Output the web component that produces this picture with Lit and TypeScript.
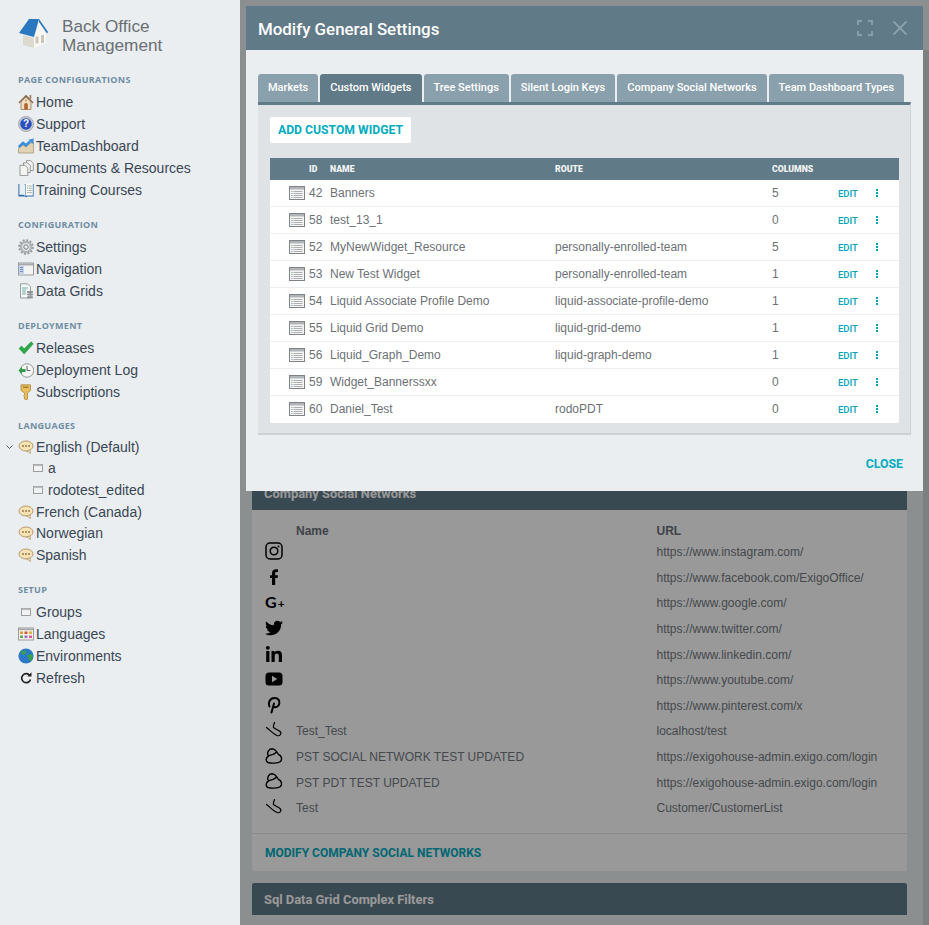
import { LitElement, html, css } from 'lit';
import { customElement } from 'lit/decorators.js';

// sidebar icons, all drawn on a 16x16 box
const ICONS: Record<string, unknown> = {
  home: html`<svg viewBox="0 0 16 16"><path d="M3 7.5V15.500h10V7.5L8 3z" fill="#f1dfc4" stroke="#8a6d50" stroke-width=".7"/><path d="M.4 8.400 8 .8l7.600 7.600-1 1L8 3 1.400 9.400z" fill="#8b6a4f"/><rect x="11.500" y="1" width="1.800" height="4" fill="#a58468"/><path d="M6.200 15.500v-4.800a1.800 1.800 0 0 1 3.600 0v4.800z" fill="#b4642a"/><rect x="7" y="5.500" width="2" height="2" fill="#c9a77e"/></svg>`,
  help: html`<svg viewBox="0 0 16 16"><circle cx="8" cy="8" r="7.500" fill="#c8ccd3" stroke="#7f8794" stroke-width=".6"/><circle cx="8" cy="8" r="5.800" fill="#2c4fc0"/><text x="8" y="11.400" text-anchor="middle" font-family="Liberation Sans" font-weight="700" font-size="10" fill="#fff">?</text></svg>`,
  chart: html`<svg viewBox="0 0 16 16"><path d="M.5 10 5 7l3 2 4-3.500 3.500-1.500V15H.5z" fill="#e2d3b4" stroke="#9c8c6c" stroke-width=".7"/><path d="M.8 9 5 5l3 2.200 4.200-3.800" fill="none" stroke="#3a8fdc" stroke-width="2.600"/><path d="M10.300 1.700 15.800.5l-.8 5.500z" fill="#3a8fdc"/></svg>`,
  docs: html`<svg viewBox="0 0 16 16"><g fill="#f4f5f3" stroke="#8a8f8c" stroke-width=".9"><path d="M8.500.6h4l2.800 2.800V10.500H8.500z"/><path d="M5.500 2.800h4l2.800 2.800v7H5.500z"/><path d="M2 5.300h5l2.800 2.800v7.500H2z"/></g></svg>`,
  book: html`<svg viewBox="0 0 16 16"><path d="M.4 2h6.600l1 1 1-1h6.600v12.500H9l-1 1-1-1H.4z" fill="#2f6ca8"/><path d="M1.400 1.200C4 1 6 1.500 7.500 3v11C6 12.800 4 12.500 1.400 13z" fill="#e9f0f4"/><rect x="8" y="1.500" width="6.800" height="12" fill="#fbfbf8"/><path d="M10.800 4h3M10.800 6.200h3M10.800 8.400h3M10.800 10.600h3" stroke="#8d979c" stroke-width=".8"/><path d="M9.200 4h1M9.200 6.200h1" stroke="#3f9d4b" stroke-width=".8"/><path d="M9.200 8.400h1M9.200 10.600h1" stroke="#c8553d" stroke-width=".8"/></svg>`,
  gear: html`<svg viewBox="0 0 16 16"><circle cx="8" cy="8" r="5" fill="none" stroke="#b3b6b8" stroke-width="2.600"/><circle cx="8" cy="8" r="6.800" fill="none" stroke="#9a9da0" stroke-width="2" stroke-dasharray="2 1.560"/><circle cx="8" cy="8" r="2.200" fill="none" stroke="#77797b" stroke-width="1"/></svg>`,
  nav: html`<svg viewBox="0 0 16 16"><rect x=".5" y="2" width="15" height="12" fill="#f4f4f4" stroke="#85888b" stroke-width=".8"/><rect x="1" y="2.500" width="14" height="2" fill="#a7abae"/><rect x="1" y="4.500" width="5" height="9" fill="#c6d3ea"/><path d="M2 6.500h3M2 8.500h3M2 10.500h3" stroke="#5a7fc0" stroke-width=".8"/></svg>`,
  grid: html`<svg viewBox="0 0 16 16"><path d="M2.500.8h7l3 3V15h-10z" fill="#f6f8f6" stroke="#7f8a86" stroke-width=".8"/><path d="M4 5h6M4 7h4M4 9h4M4 11h4" stroke="#4f9d9b" stroke-width=".8"/><g fill="#8d9196"><rect x="9" y="8" width="6" height="2" rx=".8"/><rect x="9" y="10.600" width="6" height="2" rx=".8"/><rect x="9" y="13.200" width="6" height="2" rx=".8"/></g></svg>`,
  check: html`<svg viewBox="0 0 16 16"><path d="M1 8.500 3.600 6l2.600 2.800L13 1.800l2.300 2L6.200 14z" fill="#2fa84a" stroke="#1f8a3a" stroke-width=".5"/></svg>`,
  clock: html`<svg viewBox="0 0 16 16"><circle cx="9" cy="8.500" r="6.700" fill="#f4f5f4" stroke="#8a8f8c" stroke-width=".9"/><path d="M9 4v4.500h3.500" fill="none" stroke="#555" stroke-width=".9"/><path d="M.5 8.500 4 4.700v2.300h3.500v3H4v2.300z" fill="#2ca04a"/></svg>`,
  key: html`<svg viewBox="0 0 16 16"><path d="M3 .8h9.500v5.700L9.500 9v6.200L8 16 6.500 15v-1.200L5.800 13l.7-.8-.7-.8.700-.8V9L3 6.500z" fill="#e8bd5e" stroke="#a57f2c" stroke-width=".7"/><rect x="5" y="2.500" width="5.500" height="1.500" fill="#a57f2c"/></svg>`,
  speech: html`<svg viewBox="0 0 16 16"><ellipse cx="8" cy="7" rx="7" ry="5" fill="#f7e3b3" stroke="#a8865a" stroke-width=".8"/><path d="M8.500 11.800 12.500 14.500l-.5-3.500z" fill="#f7e3b3" stroke="#a8865a" stroke-width=".6"/><g fill="#8c6d45"><circle cx="5" cy="7" r=".9"/><circle cx="8" cy="7" r=".9"/><circle cx="11" cy="7" r=".9"/></g></svg>`,
  folder: html`<svg viewBox="0 0 16 16"><rect x="3.500" y="4.500" width="9" height="7" fill="#f2f3f3" stroke="#85888b" stroke-width=".8"/><rect x="3.500" y="4.500" width="9" height="1.600" fill="#b9bcbe"/></svg>`,
  lang: html`<svg viewBox="0 0 16 16"><rect x=".5" y="2" width="15" height="12" fill="#f5f1e6" stroke="#85888b" stroke-width=".8"/><rect x="1" y="2.500" width="14" height="1.700" fill="#a7abae"/><rect x="2" y="5.500" width="3" height="2.500" fill="#d89b3f"/><rect x="6.500" y="5.500" width="3" height="2.500" fill="#c75a3a"/><rect x="11" y="5.500" width="3" height="2.500" fill="#d8b53f"/><rect x="2" y="9.500" width="3" height="2.500" fill="#5aa95f"/><rect x="6.500" y="9.500" width="3" height="2.500" fill="#a46ac0"/><rect x="11" y="9.500" width="3" height="2.500" fill="#d85a9b"/></svg>`,
  globe: html`<svg viewBox="0 0 16 16"><circle cx="8" cy="8" r="7.600" fill="#2a78c8"/><path d="M3 3.500 7 2l1.500 2-2 2.500-2 .5zM9 7l4.500-1 1.500 3-2.500 4.500L10.500 11z" fill="#3aa04f"/></svg>`,
  refresh: html`<svg viewBox="0 0 16 16"><path d="M11.800 5.500A4.500 4.500 0 1 0 12.500 9.500" fill="none" stroke="#222" stroke-width="1.700"/><path d="M9.300 6.500h4.200V2.300z" fill="#222"/></svg>`,
};

const SOCIALS: Record<string, unknown> = {
  instagram: html`<svg viewBox="0 0 18 18"><rect x="1" y="1" width="16" height="16" rx="4" fill="none" stroke="#000" stroke-width="1.500"/><circle cx="9" cy="9" r="3.800" fill="none" stroke="#000" stroke-width="1.500"/><circle cx="13.500" cy="4.500" r="1"/></svg>`,
  facebook: html`<svg viewBox="0 0 18 18"><path d="M7 17V10H5V7.200h2V5.300C7 2.700 8.500 1.200 11 1.200h2v2.900h-1.400c-1 0-1.400.5-1.400 1.300v1.800H13l-.4 2.800h-2.400v7z"/></svg>`,
  twitter: html`<svg viewBox="1.500 3 21 19"><path d="M22.460 6c-.77.35-1.600.58-2.460.69.880-.53 1.560-1.370 1.880-2.380-.83.5-1.750.85-2.720 1.050C18.370 4.500 17.260 4 16 4c-2.350 0-4.270 1.920-4.270 4.290 0 .34.04.67.11.98-3.560-.18-6.730-1.890-8.840-4.480-.37.63-.58 1.370-.58 2.150 0 1.490.75 2.810 1.910 3.560-.71 0-1.370-.2-1.950-.5v.03c0 2.080 1.480 3.820 3.440 4.210-.36.1-.74.15-1.130.15-.27 0-.54-.03-.8-.08.54 1.690 2.110 2.950 4 2.980-1.460 1.160-3.310 1.840-5.330 1.840-.34 0-.68-.02-1.020-.06C3.440 20.290 5.700 21 8.120 21 16 21 20.330 14.460 20.330 8.790c0-.19 0-.37-.01-.56.84-.6 1.560-1.360 2.140-2.230z"/></svg>`,
  linkedin: html`<svg viewBox="0 0 18 18"><circle cx="2.800" cy="2.800" r="1.900"/><rect x="1.200" y="6" width="3.200" height="11"/><path d="M6.500 6h3v1.500C10.200 6.400 11.400 5.700 13 5.700c3 0 4 1.900 4 4.800V17h-3.200v-5.800c0-1.600-.5-2.600-1.900-2.600-1.500 0-2.200 1.100-2.200 2.600V17H6.500z"/></svg>`,
  youtube: html`<svg viewBox="0 0 18 18"><path fill-rule="evenodd" d="M4 2.500h10a3.500 3.500 0 0 1 3.500 3.500v6a3.500 3.500 0 0 1-3.500 3.500H4A3.500 3.500 0 0 1 .5 12V6A3.500 3.500 0 0 1 4 2.500zM7 5.800v6.400L12.200 9z"/></svg>`,
  pinterest: html`<svg viewBox="0 0 18 18"><path d="M6.500 16.500 9 7.500M4.500 10.500C3 8 4 2 9.500 2c4 0 5.500 3 4.800 5.800-.7 3-3.800 4.300-5.800 2.700" fill="none" stroke="#000" stroke-width="2" stroke-linecap="round"/></svg>`,
  scribble: html`<svg class="hand" viewBox="0 0 18 18"><path d="M1.500 5.500C5 8 8 12 12 13.500c3 1 5-2 3-4-2-2-5-2.500-6.500-4-.5-1.500.5-3.500 1-5" fill="none" stroke="#000" stroke-width="1.200" stroke-linecap="round"/></svg>`,
  cloud: html`<svg class="hand" viewBox="0 0 18 18"><path d="M3.500 8C1.500 5 3.500 1 7 .8c3 0 5 3.200 6.500 5.700 3 1 4 4.500 2 7-2.500 2-9.500 2-12.500 1-2.500-1-2.500-5 .5-6.500 2.500-1.500 5.500-1 7.500-3.500" fill="none" stroke="#000" stroke-width="1.400" stroke-linecap="round"/></svg>`,
};

const NAV = [
  {
    title: 'PAGE CONFIGURATIONS',
    items: [
      ['home', 'Home'],
      ['help', 'Support'],
      ['chart', 'TeamDashboard'],
      ['docs', 'Documents & Resources'],
      ['book', 'Training Courses'],
    ],
  },
  {
    title: 'CONFIGURATION',
    items: [
      ['gear', 'Settings'],
      ['nav', 'Navigation'],
      ['grid', 'Data Grids'],
    ],
  },
  {
    title: 'DEPLOYMENT',
    items: [
      ['check', 'Releases'],
      ['clock', 'Deployment Log'],
      ['key', 'Subscriptions'],
    ],
  },
];

const LANGUAGES = [
  ['speech', 'English (Default)', 'open'],
  ['folder', 'a', 'sub'],
  ['folder', 'rodotest_edited', 'sub'],
  ['speech', 'French (Canada)', ''],
  ['speech', 'Norwegian', ''],
  ['speech', 'Spanish', ''],
];

const SETUP = [
  ['folder', 'Groups'],
  ['lang', 'Languages'],
  ['globe', 'Environments'],
  ['refresh', 'Refresh'],
];

const TABS = ['Markets', 'Custom Widgets', 'Tree Settings', 'Silent Login Keys', 'Company Social Networks', 'Team Dashboard Types'];

const WIDGETS = [
  [42, 'Banners', '', 5],
  [58, 'test_13_1', '', 0],
  [52, 'MyNewWidget_Resource', 'personally-enrolled-team', 5],
  [53, 'New Test Widget', 'personally-enrolled-team', 1],
  [54, 'Liquid Associate Profile Demo', 'liquid-associate-profile-demo', 1],
  [55, 'Liquid Grid Demo', 'liquid-grid-demo', 1],
  [56, 'Liquid_Graph_Demo', 'liquid-graph-demo', 1],
  [59, 'Widget_Bannerssxx', '', 0],
  [60, 'Daniel_Test', 'rodoPDT', 0],
];

const NETWORKS = [
  ['instagram', '', 'https://www.instagram.com/'],
  ['facebook', '', 'https://www.facebook.com/ExigoOffice/'],
  ['gplus', '', 'https://www.google.com/'],
  ['twitter', '', 'https://www.twitter.com/'],
  ['linkedin', '', 'https://www.linkedin.com/'],
  ['youtube', '', 'https://www.youtube.com/'],
  ['pinterest', '', 'https://www.pinterest.com/x'],
  ['scribble', 'Test_Test', 'localhost/test'],
  ['cloud', 'PST SOCIAL NETWORK TEST UPDATED', 'https://exigohouse-admin.exigo.com/login'],
  ['cloud', 'PST PDT TEST UPDATED', 'https://exigohouse-admin.exigo.com/login'],
  ['scribble', 'Test', 'Customer/CustomerList'],
];

@customElement('app-root')
export class AppRoot extends LitElement {
  static styles = css`
    :host {
      display: block;
      position: relative;
      height: 925px;
      overflow: hidden;
      background: #eaeef1;
      font-family: 'Liberation Sans', Arial, sans-serif;
    }

    .page {
      display: grid;
      grid-template-columns: 240px 1fr;
      height: 100%;
    }

    /* Sidebar */
    .sidebar {
      padding: 18px 0 0 18px;
      color: #3b4654;
    }

    .brand {
      display: flex;
      gap: 13px;
      align-items: flex-start;
      font-size: 17.200px;
      line-height: 19px;
      color: #6b6f73;
      height: 56px;
    }

    .brand svg {
      width: 31px;
      height: 31px;
      flex: none;
    }

    .brand div {
      margin-top: -1px;
    }

    .label {
      font-family: 'Open Sans', sans-serif;
      font-size: 9px;
      font-weight: 700;
      line-height: 12px;
      letter-spacing: 0.3px;
      color: #6f8da3;
      margin: 18px 0 5px;
    }

    .brand + .label {
      margin-top: 0;
    }

    .item {
      display: flex;
      align-items: center;
      gap: 2px;
      height: 22px;
      font-size: 14px;
      position: relative;
    }

    .item svg {
      width: 16px;
      height: 16px;
      flex: none;
    }

    .lang .item {
      height: 21.670px;
    }

    .lang .label {
      margin: 17px 0 4px;
    }

    .item.sub {
      padding-left: 11.500px;
      gap: 2.500px;
    }

    .item .chevron {
      position: absolute;
      left: -12px;
      top: 8px;
      width: 7px;
      height: 6px;
    }

    /* Page behind the dialog */
    .main {
      background: #eaeef1;
      padding: 478px 22px 0 12px;
    }

    .card-head {
      height: 32px;
      box-sizing: border-box;
      padding: 0 12px;
      display: flex;
      align-items: center;
      background: #607a88;
      color: #fff;
      font-family: Roboto, sans-serif;
      font-weight: 700;
      font-size: 12.900px;
      border-radius: 2px 2px 0 0;
    }

    .card-head.first {
      padding-bottom: 2px;
    }

    .card {
      margin-bottom: 12px;
      background: #fff;
      border-radius: 0 0 3px 3px;
    }

    .networks {
      display: grid;
      grid-template-columns: 31px 360.500px 1fr;
      grid-template-rows: 16.500px;
      grid-auto-rows: 25.600px;
      align-items: center;
      align-content: start;
      padding: 13px 13px 0;
      font-size: 12px;
      white-space: nowrap;
      color: #747a80;
      border-bottom: 1px solid #e3e6e8;
      height: 324px;
      box-sizing: border-box;
    }

    .networks .heading {
      font-weight: 700;
      color: #6a7078;
    }

    .networks svg {
      width: 18px;
      height: 18px;
      display: block;
      margin-top: -2px;
    }

    .networks svg.hand {
      margin-top: -1px;
    }

    .gplus {
      font-family: Lato, sans-serif;
      font-weight: 700;
      font-size: 16px;
      color: #000;
      line-height: 18px;
    }

    .gplus small {
      font-size: 12px;
      margin-left: 1px;
    }

    .card-foot {
      padding: 0 13px;
      height: 37px;
      display: flex;
      align-items: center;
      font-family: Roboto, sans-serif;
      font-weight: 700;
      font-size: 12px;
      color: #00acc1;
    }

    /* Dim layer and dialog */
    .dim {
      position: absolute;
      left: 240px;
      top: 0;
      right: 0;
      bottom: 0;
      background: rgba(0, 0, 0, 0.4);
    }

    .scrollbar {
      position: absolute;
      top: 50px;
      right: 0;
      bottom: 0;
      width: 6px;
      background: rgba(0, 0, 0, 0.1);
    }

    .dialog {
      position: absolute;
      left: 6px;
      top: 6px;
      width: 677px;
      height: 485px;
      background: #eaeef1;
      display: flex;
      flex-direction: column;
      font-family: Roboto, sans-serif;
    }

    .dialog-head {
      height: 44px;
      flex: none;
      display: flex;
      align-items: center;
      gap: 19px;
      padding: 0 15px 0 12px;
      background: #607a88;
      color: #fff;
      font-size: 16.900px;
      font-weight: 500;
    }

    .dialog-head span {
      flex: 1;
      padding-top: 1px;
    }

    .dialog-head svg {
      width: 16px;
      height: 16px;
      fill: none;
      stroke: #8aa1ad;
      stroke-width: 1.800;
    }

    .dialog-body {
      flex: 1;
      padding: 24px 12px 0;
    }

    .tabs {
      display: flex;
      gap: 2px;
    }

    .tab {
      height: 28px;
      box-sizing: border-box;
      padding: 0 10px 2px;
      display: flex;
      align-items: center;
      flex: none;
      white-space: nowrap;
      background: #8aa1ad;
      color: #fff;
      font-size: 11px;
      font-weight: 500;
      border-radius: 3px 3px 0 0;
    }

    .tab.on {
      background: #607a88;
    }

    .panel {
      border-top: 3px solid #607a88;
      background: #dfe3e6;
      padding: 12px 11px 12px 12px;
      height: 333px;
      box-sizing: border-box;
      border-right: 1px solid #cdd2d5;
      border-bottom: 2px solid #cdd2d5;
    }

    .add {
      display: inline-block;
      height: 26px;
      line-height: 26px;
      padding: 0 8px;
      background: #fff;
      border-radius: 2px;
      color: #00acc1;
      font-size: 12.200px;
      font-weight: 700;
      margin-bottom: 15px;
      vertical-align: top;
    }

    .row {
      display: grid;
      grid-template-columns: 39px 21px 225px 217px 66px 39px 22px;
      align-items: center;
      height: 27px;
      background: #fff;
      border-bottom: 1px solid #eceff1;
      box-sizing: border-box;
      font-family: 'Liberation Sans', Arial, sans-serif;
      font-size: 12px;
      color: #6c7176;
    }

    .row:last-child {
      border-bottom-color: #fff;
      border-radius: 0 0 2px 2px;
    }

    .row.top {
      height: 22px;
      background: #607a88;
      color: #f2f4f5;
      border: none;
      font-family: Roboto, sans-serif;
      font-size: 8.700px;
      font-weight: 900;
    }

    .row .doc {
      width: 16px;
      height: 14px;
      margin-left: 19px;
      display: block;
    }

    .row .edit {
      font-family: Roboto, sans-serif;
      font-size: 9.500px;
      font-weight: 500;
      color: #00a3b8;
      padding-top: 1px;
    }

    .row .more {
      display: flex;
      flex-direction: column;
      gap: 1px;
      margin-left: -1px;
    }

    .row .more i {
      width: 2px;
      height: 2px;
      background: #00a3b8;
    }

    .dialog-foot {
      flex: none;
      height: 55px;
      display: flex;
      align-items: center;
      justify-content: flex-end;
      padding: 0 20px 0 0;
      color: #00acc1;
      font-size: 12.300px;
      font-weight: 700;
    }
  `;

  renderItem(icon: string, text: string, kind = '') {
    return html`<div class="item ${kind === 'sub' ? 'sub' : ''}">
      ${kind === 'open'
        ? html`<svg class="chevron" viewBox="0 0 7 6"><path d="M.5 1.500 3.500 4.500 6.500 1.500" fill="none" stroke="#555" stroke-width="1"/></svg>`
        : ''}
      ${ICONS[icon]}<span>${text}</span>
    </div>`;
  }

  get sidebar() {
    return html`<nav class="sidebar">
      <div class="brand">
        <svg viewBox="0 0 31 31">
          <path d="M5 17l11 3v10L5 27z" fill="#dcdace"/>
          <path d="M16 19 21 4l7 11v10l-12 5z" fill="#f8f7f2"/>
          <path d="M1 15 11 1h10l-5 18z" fill="#2a78c0"/>
          <path d="M21 1l9 13-1 1.500L21 4z" fill="#2a78c0"/>
          <rect x="17.500" y="18.500" width="3" height="7" fill="#c9c7bb"/>
          <rect x="23" y="17" width="3" height="8" fill="#c9c7bb"/>
        </svg>
        <div>Back Office<br />Management</div>
      </div>
      ${NAV.map(
        group => html`<div class="label">${group.title}</div>
          ${group.items.map(([icon, text]) => this.renderItem(icon, text))}`,
      )}
      <div class="lang">
        <div class="label">LANGUAGES</div>
        ${LANGUAGES.map(([icon, text, kind]) => this.renderItem(icon, text, kind))}
      </div>
      <div class="label">SETUP</div>
      ${SETUP.map(([icon, text]) => this.renderItem(icon, text))}
    </nav>`;
  }

  get background() {
    return html`<main class="main">
      <div class="card-head first">Company Social Networks</div>
      <div class="card">
        <div class="networks">
          <div></div>
          <div class="heading">Name</div>
          <div class="heading">URL</div>
          ${NETWORKS.map(
            ([icon, name, url]) => html`<div>
                ${icon === 'gplus' ? html`<div class="gplus">G<small>+</small></div>` : SOCIALS[icon]}
              </div>
              <div>${name}</div>
              <div>${url}</div>`,
          )}
        </div>
        <div class="card-foot">MODIFY COMPANY SOCIAL NETWORKS</div>
      </div>
      <div class="card-head">Sql Data Grid Complex Filters</div>
    </main>`;
  }

  get dialog() {
    const docIcon = html`<svg class="doc" viewBox="0 0 16 14">
      <rect x=".5" y=".5" width="15" height="13" fill="#f5f5f5" stroke="#7f8386"/>
      <rect x="1" y="1" width="14" height="2.500" fill="#b2b5b7"/>
      <path d="M4.500 5.500h9M4.500 7.500h9M4.500 9.500h9M4.500 11.500h9" stroke="#9a9d9f" stroke-width=".8"/>
      <path d="M2.300 5.500h1.200M2.300 7.500h1.200" stroke="#4c9b58" stroke-width=".8"/>
      <path d="M2.300 9.500h1.200M2.300 11.500h1.200" stroke="#5a7fc0" stroke-width=".8"/>
    </svg>`;
    return html`<section class="dialog">
      <header class="dialog-head">
        <span>Modify General Settings</span>
        <svg viewBox="0 0 16 16"><path d="M1 5V1h4M11 1h4v4M15 11v4h-4M5 15H1v-4"/></svg>
        <svg viewBox="0 0 16 16"><path d="M1.500 1.500l13 13M14.500 1.500l-13 13"/></svg>
      </header>
      <div class="dialog-body">
        <div class="tabs">
          ${TABS.map(t => html`<div class="tab ${t === 'Custom Widgets' ? 'on' : ''}">${t}</div>`)}
        </div>
        <div class="panel">
          <div class="add">ADD CUSTOM WIDGET</div>
          <div class="row top">
            <div></div><div>ID</div><div>NAME</div><div>ROUTE</div><div>COLUMNS</div><div></div><div></div>
          </div>
          ${WIDGETS.map(
            ([id, name, route, cols]) => html`<div class="row">
              <div>${docIcon}</div>
              <div>${id}</div>
              <div>${name}</div>
              <div>${route}</div>
              <div>${cols}</div>
              <div class="edit">EDIT</div>
              <div class="more"><i></i><i></i><i></i></div>
            </div>`,
          )}
        </div>
      </div>
      <footer class="dialog-foot">CLOSE</footer>
    </section>`;
  }

  render() {
    return html`<div class="page">${this.sidebar} ${this.background}</div>
      <div class="dim">
        <div class="scrollbar"></div>
        ${this.dialog}
      </div>`;
  }
}
